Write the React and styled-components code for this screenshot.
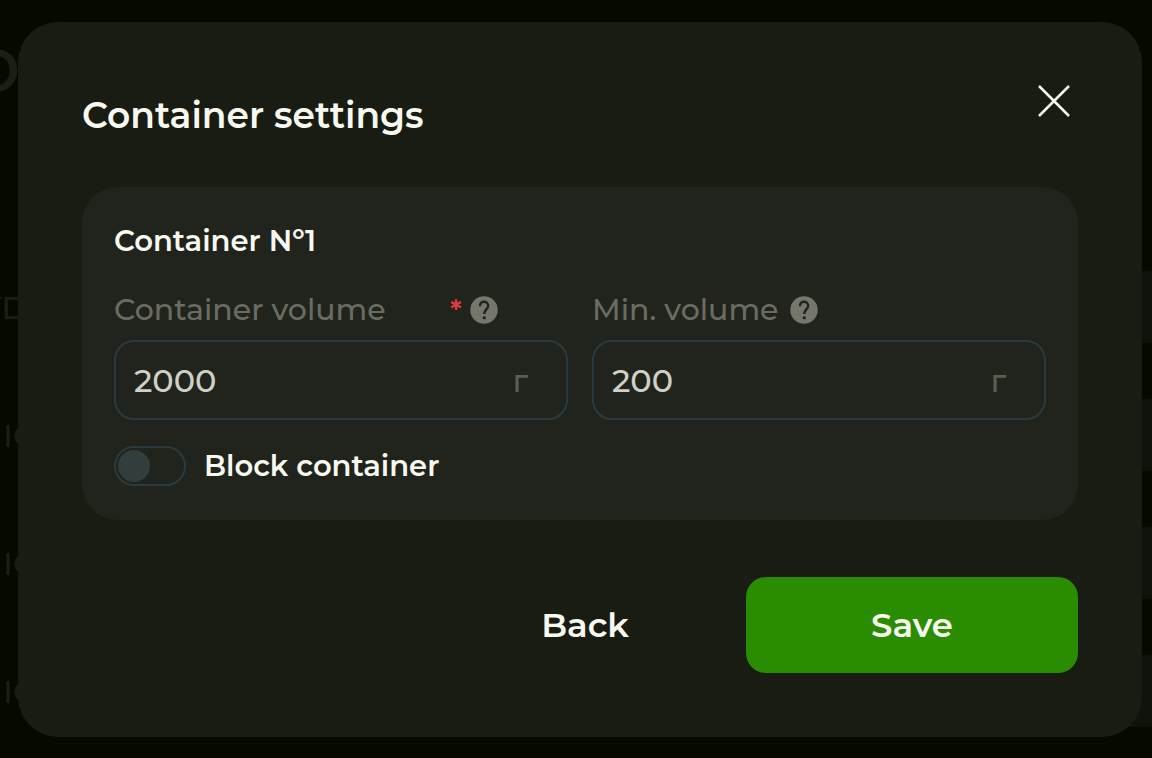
import { useState } from "react";
import styled, { createGlobalStyle, ThemeProvider } from "styled-components";

const theme = {
  page: "#060900",
  row: "#10130b",
  ghost: "#1b1e16",
  dialog: "#191c13",
  card: "#21241c",
  border: "#293b3f",
  knob: "#323d3d",
  text: "#f7f8f0",
  value: "#cfd0c8",
  label: "#6a6c63",
  unit: "#5b5d53",
  icon: "#75776d",
  required: "#e8393f",
  accent: "#2a8c00",
};

const GlobalStyle = createGlobalStyle`
  * {
    box-sizing: border-box;
  }
  body {
    margin: 0;
    overflow: hidden;
    background: ${theme.page};
  }
  body, button, input {
    font-family: "Montserrat", Inter, "Liberation Sans", sans-serif;
  }
`;

const Page = styled.div`
  height: 100vh;
  overflow: hidden;
  color: ${(props) => props.theme.ghost};
`;

const PageTitle = styled.div`
  height: 271px;
  line-height: 128px;
  font-size: 80px;
  font-weight: 500;
  text-indent: -30px;
`;

const PageRow = styled.div`
  display: flex;
  align-items: center;
  height: 72px;
  margin-bottom: 56px;
  font-size: 32px;
  font-weight: 500;
  span {
    flex: 1;
    text-indent: ${(props) => (props.$head ? "-19px" : "3px")};
  }
`;

const PageField = styled.div`
  flex: 1;
  height: 100%;
  background: ${(props) => props.theme.row};
`;

const Overlay = styled.div`
  position: fixed;
  inset: 0;
  padding: 22px 10px 20px 18px;
`;

const Dialog = styled.form`
  padding: 61px 64px 64px;
  border-radius: 40px;
  background: ${(props) => props.theme.dialog};
  color: ${(props) => props.theme.text};
`;

const Header = styled.header`
  display: flex;
  align-items: flex-start;
  justify-content: space-between;
  padding-bottom: 48px;
`;

const Title = styled.h1`
  margin: 0;
  padding-top: 8px;
  font-size: 36px;
  line-height: 48px;
  font-weight: 600;
`;

const CloseButton = styled.button`
  display: flex;
  margin-right: 6px;
  padding: 0;
  border: none;
  background: none;
  color: ${(props) => props.theme.text};
  cursor: pointer;
`;

const Card = styled.section`
  padding: 32px 32px 34px;
  border-radius: 36px;
  background: ${(props) => props.theme.card};
`;

const CardTitle = styled.h2`
  margin: 0 0 29px;
  font-size: 29px;
  line-height: 44px;
  font-weight: 600;
`;

const Fields = styled.div`
  display: grid;
  grid-template-columns: repeat(2, minmax(0, 1fr));
  gap: 24px;
`;

const FieldHead = styled.div`
  display: flex;
  align-items: center;
  height: 36px;
  margin-bottom: 12px;
  label {
    min-width: ${(props) => (props.$required ? "336px" : "0")};
    margin-right: ${(props) => (props.$required ? "0" : "12px")};
    font-size: 30px;
    line-height: 36px;
    font-weight: 500;
    color: ${(props) => props.theme.label};
  }
`;

const Required = styled.span`
  width: 20px;
  font-size: 28px;
  line-height: 36px;
  font-weight: 600;
  color: ${(props) => props.theme.required};
`;

const HelpButton = styled.button`
  display: flex;
  padding: 0;
  border: none;
  background: none;
  color: ${(props) => props.theme.icon};
  cursor: help;
`;

const InputBox = styled.div`
  display: flex;
  align-items: center;
  height: 80px;
  padding: 0 38px 0 18px;
  border: 2px solid ${(props) => props.theme.border};
  border-radius: 20px;
  input {
    flex: 1;
    min-width: 0;
    padding: 0;
    border: none;
    outline: none;
    background: none;
    font-size: 32px;
    font-weight: 500;
    color: ${(props) => props.theme.value};
  }
  span {
    font-size: 32px;
    font-weight: 500;
    color: ${(props) => props.theme.unit};
  }
`;

const SwitchRow = styled.label`
  display: flex;
  align-items: center;
  gap: 18px;
  margin-top: 26px;
  font-size: 29px;
  line-height: 40px;
  font-weight: 600;
  cursor: pointer;
`;

const Switch = styled.input`
  appearance: none;
  display: flex;
  align-items: center;
  width: 72px;
  height: 40px;
  margin: 0;
  padding: 0 2px;
  border: 2px solid ${(props) => props.theme.border};
  border-radius: 20px;
  cursor: pointer;
  &::before {
    content: "";
    width: 32px;
    height: 32px;
    border-radius: 50%;
    background: ${(props) => props.theme.knob};
  }
  &:checked {
    justify-content: flex-end;
  }
  &:checked::before {
    background: ${(props) => props.theme.accent};
  }
`;

const Footer = styled.footer`
  display: flex;
  justify-content: flex-end;
  margin-top: 57px;
`;

const Button = styled.button`
  flex: 0 1 ${(props) => (props.$primary ? "332px" : "322px")};
  height: 96px;
  border: none;
  border-radius: 20px;
  background: ${(props) => (props.$primary ? props.theme.accent : "none")};
  color: ${(props) => props.theme.text};
  font-size: 34px;
  font-weight: 600;
  cursor: pointer;
`;

const CloseIcon = () => (
  <svg width="36" height="36" viewBox="0 0 36 36" fill="none" aria-hidden="true">
    <path d="M3 3 33 33M33 3 3 33" stroke="currentColor" strokeWidth="2.5" />
  </svg>
);

const HelpIcon = () => (
  <svg width="28" height="28" viewBox="0 0 28 28" fill="none" aria-hidden="true">
    <circle cx="14" cy="14" r="13.7" fill="currentColor" />
    <path
      d="M10 10.2C10 7.2 11.6 5.8 14 5.8s4.2 1.6 4.2 4c0 3.4-4 4-4 8.2"
      stroke={theme.card}
      strokeWidth="2.4"
    />
    <rect x="12.8" y="20.4" width="2.8" height="2.8" fill={theme.card} />
  </svg>
);

const Field = ({ id, label, required, value, onChange }) => (
  <div>
    <FieldHead $required={required}>
      <label htmlFor={id}>{label}</label>
      {required && <Required>*</Required>}
      <HelpButton type="button" aria-label={`${label} help`}>
        <HelpIcon />
      </HelpButton>
    </FieldHead>
    <InputBox>
      <input
        id={id}
        inputMode="numeric"
        value={value}
        onChange={(e) => onChange(e.target.value)}
      />
      <span>г</span>
    </InputBox>
  </div>
);

const App = () => {
  const [volume, setVolume] = useState("2000");
  const [minVolume, setMinVolume] = useState("200");
  const [blocked, setBlocked] = useState(false);

  return (
    <ThemeProvider theme={theme}>
      <GlobalStyle />
      <Page aria-hidden="true">
        <PageTitle>o</PageTitle>
        {["YD", "IO", "IO", "IO"].map((name, i) => (
          <PageRow key={i} $head={i === 0}>
            <span>{name}</span>
            <PageField />
          </PageRow>
        ))}
      </Page>
      <Overlay>
        <Dialog
          role="dialog"
          aria-labelledby="dialog-title"
          onSubmit={(e) => e.preventDefault()}
        >
          <Header>
            <Title id="dialog-title">Container settings</Title>
            <CloseButton type="button" aria-label="Close">
              <CloseIcon />
            </CloseButton>
          </Header>
          <Card>
            <CardTitle>Container Nº1</CardTitle>
            <Fields>
              <Field
                id="volume"
                label="Container volume"
                required
                value={volume}
                onChange={setVolume}
              />
              <Field
                id="min-volume"
                label="Min. volume"
                value={minVolume}
                onChange={setMinVolume}
              />
            </Fields>
            <SwitchRow>
              <Switch
                type="checkbox"
                role="switch"
                checked={blocked}
                onChange={(e) => setBlocked(e.target.checked)}
              />
              Block container
            </SwitchRow>
          </Card>
          <Footer>
            <Button type="button">Back</Button>
            <Button type="submit" $primary>
              Save
            </Button>
          </Footer>
        </Dialog>
      </Overlay>
    </ThemeProvider>
  );
};

export default App;
